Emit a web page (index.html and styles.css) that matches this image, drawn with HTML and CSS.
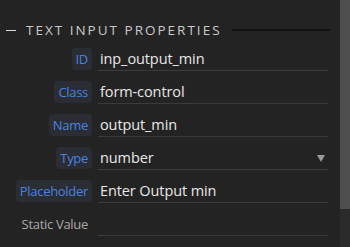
FILE: index.html
```html
<!DOCTYPE html>
<html lang="en">
<head>
    <meta charset="UTF-8">
    <title>Text Input Properties</title>
    <link rel="stylesheet" href="styles.css">
</head>
<body>
    <div class="frame">
        <div class="panel">
            <div class="section-title">
                <span class="dash"></span>
                <span class="title-text">TEXT INPUT PROPERTIES</span>
                <span class="rule"></span>
            </div>

            <div class="props">
                <label class="tag">ID</label>
                <div class="field">inp_output_min</div>

                <label class="tag">Class</label>
                <div class="field">form-control</div>

                <label class="tag">Name</label>
                <div class="field">output_min</div>

                <label class="tag">Type</label>
                <div class="field select">number<span class="caret"></span></div>

                <label class="tag">Placeholder</label>
                <div class="field">Enter Output min</div>

                <label class="tag plain">Static Value</label>
                <div class="field"></div>
            </div>
        </div>
        <div class="scrollbar">
            <div class="thumb"></div>
        </div>
    </div>
</body>
</html>
```

FILE: styles.css
```css
body {
    margin: 0;
    background: #232323;
    font-family: 'Open Sans', sans-serif;
    color: #e8e8e8;
}

.frame {
    display: flex;
    height: 247px;
    overflow: hidden;
}

.panel {
    flex: 1;
    padding: 0 10px 0 6px;
}

.section-title {
    display: flex;
    align-items: center;
    height: 20px;
    margin-top: 20px;
}

.dash {
    width: 10px;
    height: 1px;
    background: #d8d8d8;
    margin-right: 10px;
}

.title-text {
    font-size: 13.5px;
    letter-spacing: 2px;
    color: #c9c9c9;
}

.rule {
    flex: 1;
    height: 2px;
    background: #121212;
    margin-left: 10px;
}

.props {
    display: grid;
    grid-template-columns: 86px 1fr;
    column-gap: 6px;
    row-gap: 10px;
    margin-top: 8px;
    margin-right: 2px;
}

.tag {
    justify-self: end;
    height: 22px;
    line-height: 22px;
    padding: 0 4px;
    border-radius: 4px;
    background: #2a2d33;
    color: #4a82e0;
    font-size: 13px;
    letter-spacing: -0.3px;
}

.tag.plain {
    background: none;
    color: #a9a9a9;
}

.field {
    height: 22px;
    line-height: 22px;
    padding-left: 2px;
    border-bottom: 1px solid #3b3b3b;
    font-size: 14.5px;
    letter-spacing: -0.1px;
}

.select {
    position: relative;
}

.caret {
    position: absolute;
    right: 3px;
    top: 8px;
    border-left: 4px solid transparent;
    border-right: 4px solid transparent;
    border-top: 7px solid #9a9a9a;
}

.scrollbar {
    width: 10px;
    background: #2a2a2a;
}

.thumb {
    height: 209px;
    background: #4e4e4e;
}
```
